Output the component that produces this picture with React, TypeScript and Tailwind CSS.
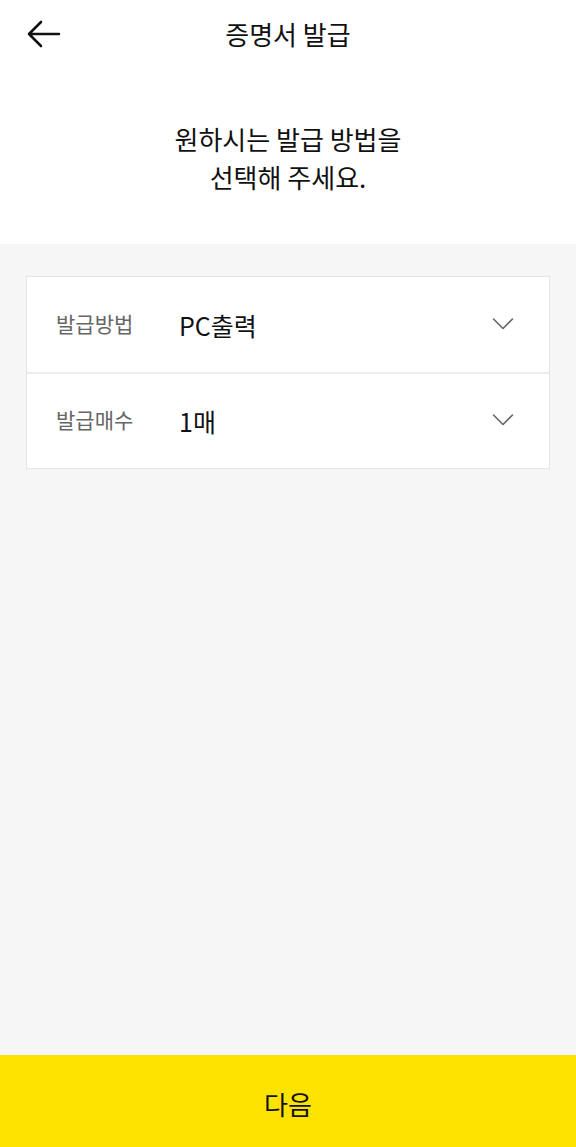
import React from "react";

const font = { fontFamily: '"Noto Sans CJK KR", "Noto Sans", sans-serif' };

function Chevron() {
  return (
    <svg width="22" height="14" viewBox="0 0 22 14" fill="none">
      <path d="M1.5 2L11 11.5L20.5 2" stroke="#666" strokeWidth="1.6" strokeLinecap="round" strokeLinejoin="round" />
    </svg>
  );
}

function Row({ label, value, last }: { label: string; value: string; last?: boolean }) {
  return (
    <div className={`flex items-center ${last ? "h-[94px]" : "h-[97px] border-b-2 border-[#ececec]"} pl-[29px] pr-[35px]`}>
      <div className="w-[123px] text-[21px] text-[#666] -mt-[2px]">{label}</div>
      <div className="flex-1 text-[25px] text-[#111] mt-[2px]">{value}</div>
      <div className="-mt-[2px]"><Chevron /></div>
    </div>
  );
}

export default function App() {
  return (
    <div className="w-[576px] h-[1147px] flex flex-col bg-[#f6f6f6]" style={font}>
      <div className="bg-white h-[244px] flex flex-col">
        <div className="relative h-[70px] flex items-center justify-center">
          <svg className="absolute left-[26px] top-[20px]" width="36" height="28" viewBox="0 0 36 28" fill="none">
            <path d="M33 14H3M15 2L3 14L15 26" stroke="#111" strokeWidth="2.6" strokeLinecap="round" strokeLinejoin="round" />
          </svg>
          <div className="text-[26px] text-[#111] -mt-[4px]">증명서 발급</div>
        </div>
        <div className="mt-[50px] text-center text-[26px] leading-[38px] text-[#111]">
          원하시는 발급 방법을<br />선택해 주세요.
        </div>
      </div>
      <div className="flex-1 px-[26px] pt-[32px]">
        <div className="bg-white border border-[#e6e6e6]">
          <Row label="발급방법" value="PC출력" />
          <Row label="발급매수" value="1매" last />
        </div>
      </div>
      <button className="h-[92px] w-full bg-[#ffe300] flex items-center justify-center text-[26px] text-[#111] pt-[5px]" style={font}>
        다음
      </button>
    </div>
  );
}
